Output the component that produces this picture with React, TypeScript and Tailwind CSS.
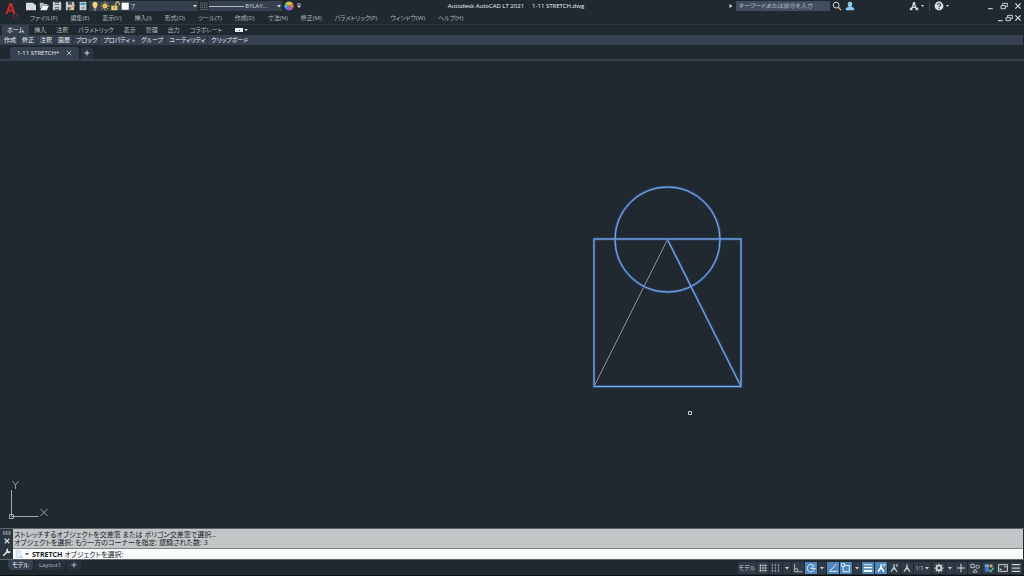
import React from 'react';

const MENUS = [
  'ファイル(F)',
  '編集(E)',
  '表示(V)',
  '挿入(I)',
  '形式(O)',
  'ツール(T)',
  '作成(D)',
  '寸法(N)',
  '修正(M)',
  'パラメトリック(P)',
  'ウィンドウ(W)',
  'ヘルプ(H)',
];

const RIBBON_TABS = ['ホーム', '挿入', '注釈', 'パラメトリック', '表示', '管理', '出力', 'コラボレート'];

const PANELS = ['作成', '修正', '注釈', '画層', 'ブロック', 'プロパティ', 'グループ', 'ユーティリティ', 'クリップボード'];

interface IconProps {
  children: React.ReactNode;
  className?: string;
}

// every icon is drawn on a 12 unit grid
const Icon: React.FC<IconProps> = ({ children, className = 'size-3' }) => (
  <svg viewBox="0 0 12 12" className={`shrink-0 ${className}`} fill="none" stroke="currentColor" strokeWidth="1" aria-hidden="true">
    {children}
  </svg>
);

const Caret = () => (
  <Icon className="size-1.5">
    <path d="M2 4h8L6 9z" fill="currentColor" stroke="none" />
  </Icon>
);

const QUICK_ACCESS = [
  {
    name: '新規作成',
    icon: <path d="M0 2h8l4 3v6H0z" fill="#d9dcdd" stroke="none" />,
  },
  {
    name: '開く',
    icon: (
      <>
        <path d="M1 2h4l1 1.500h4V5H4L1 10z" fill="#b9bec1" stroke="none" />
        <path d="M4 5.500H12L9.500 11H1.500z" fill="#f0f1f1" stroke="none" />
      </>
    ),
  },
  {
    name: '上書き保存',
    icon: (
      <>
        <path d="M1 1h10v10H1z" fill="#c9cdcf" stroke="none" />
        <path d="M3.500 1h5v3.500h-5zM3.500 7.500h5V11h-5z" fill="#4c565e" stroke="none" />
        <path d="M4 9h4M4 3h4" stroke="#dfe2e3" />
      </>
    ),
  },
  {
    name: '名前を付けて保存',
    icon: (
      <>
        <path d="M1 1h10v10H1z" fill="#c9cdcf" stroke="none" />
        <path d="M3.500 1h5v3.500h-5zM3 7.500h4V11H3z" fill="#4c565e" stroke="none" />
        <path d="M5.500 10.500L11.500 5" stroke="#e2a24e" strokeWidth="1.800" />
      </>
    ),
  },
  {
    name: '印刷',
    icon: (
      <>
        <path d="M2 1h8v10H2z" fill="#d6dadd" stroke="none" />
        <path d="M3 2h6v3H3z" fill="#4b94c8" stroke="none" />
        <path d="M4 7.500h4M4 9.500h4" stroke="#6f7a82" />
      </>
    ),
  },
];

const TitleBar = () => (
  <header className="flex h-3 items-center">
    <div className="flex min-w-0 flex-1 items-center">
      <div className="flex w-[25px] shrink-0" />
      <div className="flex gap-px">
        {QUICK_ACCESS.map((q) => (
          <button key={q.name} aria-label={q.name} className="flex size-3 items-center justify-center">
            <Icon className="size-2.5">{q.icon}</Icon>
          </button>
        ))}
      </div>
      <div className="flex h-2.5 w-[109px] shrink-0 items-center bg-[#35414f] pl-px">
        <Icon className="size-2.5">
          <path d="M6 1a3.300 3.300 0 0 0-1.800 6v1.500h3.600V7A3.300 3.300 0 0 0 6 1z" fill="#f4d474" stroke="none" />
          <path d="M4.500 9.500h3M5 11h2" stroke="#c9cdcf" />
        </Icon>
        <Icon className="size-2.5">
          <circle cx="6" cy="6" r="2.800" fill="#f6cf68" stroke="none" />
          <path d="M6 .5v11M.5 6h11M2 2l8 8M10 2l-8 8" stroke="#e9b94e" />
        </Icon>
        <Icon className="size-2.5">
          <path d="M1.500 5.500H9V11H1.500z" fill="#edca70" stroke="none" />
          <path d="M7 5.500V3a2 2 0 0 1 4 0v2" stroke="#edca70" strokeWidth="1.300" />
          <path d="M5.200 7v2" stroke="#6b5a2c" />
        </Icon>
        <Icon className="size-2.5">
          <path d="M2 2h8.500v8.500H2z" fill="#fff" stroke="none" />
        </Icon>
        <select aria-label="画層" className="ml-px min-w-0 flex-1 appearance-none bg-transparent text-[7px] leading-none">
          <option>7</option>
        </select>
        <Caret />
      </div>
      <button aria-label="線種" className="flex w-[11px] shrink-0 items-center justify-center text-[#8e979d]">
        <Icon className="size-2.5">
          <path d="M1 2.500h10M1 5h10M1 7.500h10M1 10h10" strokeDasharray="1.500 .8" />
        </Icon>
      </button>
      <div className="flex h-2.5 w-[73px] shrink-0 items-center bg-[#35414f]">
        <div className="h-px w-[35px] bg-[#b5babe]" />
        <select aria-label="線の太さ" className="min-w-0 flex-1 appearance-none bg-transparent pl-px text-[6px] leading-none">
          <option>BYLAY...</option>
        </select>
        <Caret />
      </div>
      <button aria-label="色" className="ml-0.5 flex shrink-0">
        <Icon className="size-2.5">
          <path d="M6 6V.5A5.500 5.500 0 0 1 10.800 3.300z" fill="#f2b33c" stroke="none" />
          <path d="M6 6l4.800-2.700a5.500 5.500 0 0 1 0 5.400z" fill="#ef7b45" stroke="none" />
          <path d="M6 6l4.800 2.700A5.500 5.500 0 0 1 6 11.500z" fill="#d0519d" stroke="none" />
          <path d="M6 6v5.500a5.500 5.500 0 0 1-4.800-2.800z" fill="#5a6fe0" stroke="none" />
          <path d="M6 6L1.200 8.700a5.500 5.500 0 0 1 0-5.400z" fill="#47b7dc" stroke="none" />
          <path d="M6 6L1.200 3.300A5.500 5.500 0 0 1 6 .5z" fill="#a8cf4e" stroke="none" />
        </Icon>
      </button>
      <button aria-label="クイック アクセスのカスタマイズ" className="ml-0.5 flex shrink-0">
        <Icon className="size-1.5">
          <path d="M2 2h8" strokeWidth="1.500" />
          <path d="M2 5h8l-4 5z" fill="currentColor" stroke="none" />
        </Icon>
      </button>
    </div>

    <h1 className="flex shrink-0 gap-2 pl-2 text-[6px] leading-none text-[#f1f3f4]">
      <span>Autodesk AutoCAD LT 2021</span>
      <span>1-11 STRETCH.dwg</span>
    </h1>

    <div className="flex min-w-0 flex-1 items-center justify-end">
      <button aria-label="検索を縮小" className="mr-0.5 flex">
        <Icon className="size-1.5">
          <path d="M3 2l6 4-6 4z" fill="currentColor" stroke="none" />
        </Icon>
      </button>
      <input
        type="search"
        aria-label="検索"
        placeholder="キーワードまたは語句を入力"
        className="h-2.5 w-[94px] bg-[#404c60] px-0.5 text-[6px] italic leading-none placeholder:text-[#b9c0c8]"
      />
      <button aria-label="検索を実行" className="ml-0.5 flex">
        <Icon className="size-2.5">
          <circle cx="5" cy="5" r="3.500" strokeWidth="1.200" />
          <path d="M7.500 7.500l3.500 3.500" stroke="#cdb47d" strokeWidth="1.600" />
        </Icon>
      </button>
      <button aria-label="サインイン" className="ml-[3px] flex text-[#8bc9f2]">
        <Icon className="size-2.5">
          <path d="M6 1a2.700 2.700 0 0 1 2.700 3c0 1.300-.5 2.200-1.200 2.800L11 8.500V11H1V8.500l3.500-1.700C3.800 6.200 3.300 5.300 3.300 4A2.700 2.700 0 0 1 6 1z" fill="currentColor" stroke="none" />
        </Icon>
      </button>
      <button aria-label="アプリ ストア" className="ml-[54px] flex items-center">
        <Icon className="size-2.5">
          <path d="M6 2.500L3 9.500M6 2.500l3 7M4 7.500h4" strokeWidth="1.500" />
          <path d="M4.500 1.500h3v3h-3zM1 8h3v3H1zM8 8h3v3H8z" fill="currentColor" stroke="none" />
        </Icon>
        <Icon className="size-1.5">
          <path d="M4 4h6L7 8z" fill="currentColor" stroke="none" />
        </Icon>
      </button>
      <div className="mx-1 h-2.5 w-px bg-[#3b4650]" />
      <button aria-label="ヘルプ" className="flex items-center">
        <Icon className="size-2.5">
          <circle cx="6" cy="6" r="5.300" fill="#dde0e2" stroke="none" />
          <path d="M4.300 4.700c0-2.300 3.600-2.100 3.600 0C7.900 6 6 6 6 7.500M6 8.500V10" stroke="#35414f" strokeWidth="1.300" />
        </Icon>
        <Icon className="size-1.5">
          <path d="M4 4h6L7 8z" fill="currentColor" stroke="none" />
        </Icon>
      </button>
      <WindowButtons gap="ml-9 gap-1.5" />
    </div>
  </header>
);

const WindowButtons: React.FC<{ gap: string }> = ({ gap }) => (
  <div className={`flex items-center pr-0.5 ${gap}`}>
    <button aria-label="最小化" className="flex">
      <Icon className="size-2">
        <path d="M3 10h7" strokeWidth="1.600" />
      </Icon>
    </button>
    <button aria-label="元に戻す" className="flex">
      <Icon className="size-2">
        <path d="M1.500 5.500h6.500v4.500H1.500zM4 5V2h7v5H8.500" strokeWidth="1.400" />
      </Icon>
    </button>
    <button aria-label="閉じる" className="flex">
      <Icon className="size-2">
        <path d="M2 2l8 8M10 2l-8 8" strokeWidth="1.800" />
      </Icon>
    </button>
  </div>
);

const Ribbon = () => (
  <>
    <nav className="flex h-[13px] items-center justify-between border-b border-[#2c3843] pl-[30px]">
      <div className="flex gap-[13px]">
        {MENUS.map((m) => (
          <button key={m} className="whitespace-nowrap text-[#b3b9be]">
            {m}
          </button>
        ))}
      </div>
      <WindowButtons gap="gap-px" />
    </nav>

    <div className="flex h-2.5 items-stretch pl-0.5">
      {RIBBON_TABS.map((t, i) => (
        <button
          key={t}
          className={`whitespace-nowrap px-[5px] ${i === 0 ? 'bg-[#35414e] text-white' : 'text-[#b3b9be]'}`}
        >
          {t}
        </button>
      ))}
      <button aria-label="リボンを最小化" className="ml-2 flex items-center gap-px">
        <span className="flex h-1 w-2 items-center justify-center bg-[#eceeef]">
          <span className="size-px bg-[#35414e]" />
        </span>
        <Icon className="size-1">
          <path d="M1 3h10L6 10z" fill="currentColor" stroke="none" />
        </Icon>
      </button>
    </div>

    <div className="mr-px flex h-2.5 items-stretch bg-[#35414e] pl-px text-[#eceeef]">
      {PANELS.map((p) => (
        <button key={p} className="flex items-center gap-0.5 whitespace-nowrap border-r border-[#2a3540] pr-0.5 pl-[3px] last:border-r-0">
          {p}
          {p === 'プロパティ' && <span>»</span>}
        </button>
      ))}
    </div>
  </>
);

const FileTabs = () => (
  <div className="flex h-4 shrink-0 items-end border-b-2 border-[#35414e] pl-2.5">
    <div className="flex h-3 items-center gap-[7px] rounded-t bg-[#35414e] px-[7px]">
      <span className="whitespace-nowrap text-[#eceeef]">1-11 STRETCH*</span>
      <button aria-label="図面を閉じる" className="flex">
        <Icon className="size-1.5">
          <path d="M1.500 1.500l9 9M10.500 1.500l-9 9" strokeWidth="1.500" />
        </Icon>
      </button>
    </div>
    <button aria-label="新しい図面" className="ml-0.5 flex h-3 w-3 items-center justify-center rounded-t bg-[#2a3641]">
      <Icon className="size-1.5">
        <path d="M6 1v10M1 6h10" strokeWidth="2" />
      </Icon>
    </button>
  </div>
);

const Drawing = () => (
  <main className="relative min-h-0 flex-1 overflow-hidden">
    <svg viewBox="0 0 1024 467" className="absolute inset-0 size-full" fill="none" role="img" aria-label="図面">
      <path d="M667.500 178.500L594 325.500" stroke="#8f9595" />
      <g stroke="#35609f" strokeWidth="2.300">
        <path d="M594 178h147v147.500H594z" />
        <path d="M667.500 178.500L741 325.500" />
        <circle cx="667.500" cy="178.500" r="52.500" />
      </g>
      <g stroke="#82a8dc" strokeWidth="1">
        <path d="M594 178h147v147.500H594z" />
        <path d="M667.500 178.500L741 325.500" />
        <circle cx="667.500" cy="178.500" r="52.500" />
      </g>
      <path d="M688.500 350.500h3v3h-3z" stroke="#c9cccd" />
    </svg>
    <svg viewBox="0 0 56 56" className="absolute bottom-0 left-0 size-14" fill="none" stroke="#a3a9ac" aria-hidden="true">
      <path d="M11.500 18v26.500H38.500" />
      <path d="M9.500 42.500h4v4h-4z" />
      <path d="M12.500 9l3 4 3-4M15.500 13v4M40.500 37l7 7M47.500 37l-7 7" strokeWidth=".9" />
    </svg>
  </main>
);

const CommandLine = () => (
  <section aria-label="コマンド ライン" className="flex h-8 shrink-0 border-y border-[#5d666c] pr-px">
    <div className="flex w-[13px] shrink-0 flex-col items-center justify-between bg-[#2a3540] py-0.5 text-[#dfe2e4]">
      <Icon className="h-1 w-2.5">
        <path d="M-6 3h24M-6 9h24" strokeWidth="3" strokeDasharray="3 1.500" />
      </Icon>
      <button aria-label="閉じる" className="flex">
        <Icon className="size-1.5">
          <path d="M1.500 1.500l9 9M10.500 1.500l-9 9" strokeWidth="2.200" />
        </Icon>
      </button>
      <button aria-label="カスタマイズ" className="flex">
        <Icon className="size-2.5">
          <path d="M1.500 10.500L7 5" strokeWidth="2" />
          <path d="M7.500 1.500a3 3 0 1 0 3.300 3.600L8.500 5.500 7 4z" fill="currentColor" stroke="none" />
        </Icon>
      </button>
    </div>
    <div className="flex min-w-0 flex-1 flex-col text-[7px] text-[#161b1f]">
      <div className="flex-1 bg-[#c3c6c7] pt-0.5 pl-px leading-2">
        <p>ストレッチするオブジェクトを交差窓 または ポリゴン交差窓で選択...</p>
        <p>オブジェクトを選択: もう一方のコーナーを指定: 認識された数: 3</p>
      </div>
      <div className="flex h-[11px] items-center border-t border-[#7d8387] bg-[#fbfdfd] pl-0.5">
        <button aria-label="最近使用したコマンド" className="flex items-center gap-px text-[#4c565e]">
          <Icon className="size-2">
            <path d="M2 1h6l1.500 10H2z" fill="#e6eff4" stroke="#b7cad5" />
            <path d="M8 11h4" stroke="#7cc0a4" />
          </Icon>
          <Caret />
        </button>
        <label htmlFor="command" className="ml-0.5 whitespace-nowrap">
          <b>STRETCH</b> オブジェクトを選択:
        </label>
        <input id="command" className="h-2 min-w-0 flex-1 bg-transparent pl-1 outline-none" />
      </div>
    </div>
  </section>
);

interface ToolProps {
  name: string;
  on?: boolean;
  width?: string;
  children: React.ReactNode;
}

const Tool: React.FC<ToolProps> = ({ name, on, width = 'w-3', children }) => (
  <button
    aria-label={name}
    aria-pressed={on}
    className={`flex h-3 items-center justify-center ${width} ${on ? 'bg-[#4f86bd] text-white' : 'bg-[#303b47] text-[#ccd0d3]'}`}
  >
    {children}
  </button>
);

const PERSON = 'M6 1.500v3.500L2.500 10.500M6 5l3.500 5.500M4.500 7h3';

const StatusBar = () => (
  <footer className="flex h-4 shrink-0 justify-between border-b border-[#0d1114] pr-0.5 pl-2">
    <div className="flex h-2.5 items-stretch gap-0.5">
      <button className="rounded-b bg-[#35414e] px-1 text-white">モデル</button>
      <button className="rounded-b bg-[#27323c] px-1 text-[#b3b9be]">Layout1</button>
      <button aria-label="新しいレイアウト" className="flex w-3.5 items-center justify-center rounded-b bg-[#27323c]">
        <Icon className="size-1.5">
          <path d="M6 1v10M1 6h10" strokeWidth="1.600" />
        </Icon>
      </button>
    </div>
    <div className="flex items-center gap-px">
      <Tool name="モデル空間" width="w-[18px]">
        モデル
      </Tool>
      <Tool name="グリッド">
        <Icon className="size-2.5">
          <path d="M3 1v10M6 1v10M9 1v10M1 3h10M1 6h10M1 9h10" strokeWidth=".7" />
        </Icon>
      </Tool>
      <Tool name="スナップ">
        <Icon className="size-2.5">
          <path d="M1 2.500h10M1 6h10M1 9.500h10" strokeWidth="1.400" strokeDasharray="1.400 2.200" />
        </Icon>
      </Tool>
      <Tool name="スナップ設定" width="w-2">
        <Caret />
      </Tool>
      <Tool name="直交モード">
        <Icon className="size-2.5">
          <path d="M2 1v9.500h9M2 7h3.500v3.500" />
        </Icon>
      </Tool>
      <Tool name="極トラッキング" on>
        <Icon className="size-2.5">
          <path d="M9 3A4.500 4.500 0 1 0 10.300 7M6 6.500h5.500M6 6.500l4.500-4.500" />
        </Icon>
      </Tool>
      <Tool name="極トラッキング設定" width="w-2">
        <Caret />
      </Tool>
      <Tool name="オブジェクト スナップ トラッキング" on>
        <Icon className="size-2.5">
          <path d="M10 1.500L2 10h9.500" />
        </Icon>
      </Tool>
      <Tool name="オブジェクト スナップ" on>
        <Icon className="size-2.5">
          <path d="M2.500 3h7.500v7.500H2.500z" />
          <path d="M.7.700h3.500v3.500H.7z" fill="#4f86bd" strokeWidth=".9" />
        </Icon>
      </Tool>
      <Tool name="オブジェクト スナップ設定" width="w-2">
        <Caret />
      </Tool>
      <Tool name="線の太さ" on>
        <Icon className="size-2.5">
          <path d="M1 2h10" />
          <path d="M1 5.500h10" strokeWidth="1.700" />
          <path d="M1 9.500h10" strokeWidth="2.400" />
        </Icon>
      </Tool>
      <Tool name="注釈オブジェクトを表示" on>
        <Icon className="size-2.5">
          <path d={PERSON} strokeWidth="1.800" />
          <circle cx="9.500" cy="2.500" r="1.300" strokeWidth=".8" />
        </Icon>
      </Tool>
      <Tool name="尺度を自動追加">
        <Icon className="size-2.5">
          <path d={PERSON} strokeWidth="1.500" />
          <path d="M9.500 1v3.500M8 2.700h3" strokeWidth=".9" />
        </Icon>
      </Tool>
      <Tool name="注釈尺度">
        <Icon className="size-2.5">
          <path d={PERSON} strokeWidth="1.500" />
        </Icon>
      </Tool>
      <Tool name="尺度 1:1" width="w-[17px]">
        <span>1:1</span>
        <Caret />
      </Tool>
      <Tool name="ワークスペースの切り替え" width="w-[13px]">
        <Icon className="size-2.5">
          <circle cx="6" cy="6" r="2.800" strokeWidth="2.200" />
          <path d="M6 .5v2M6 9.500v2M.5 6h2M9.500 6h2M2.100 2.100l1.400 1.400M8.500 8.500l1.400 1.400M9.900 2.100L8.500 3.500M3.500 8.500L2.100 9.900" strokeWidth="1.500" />
        </Icon>
      </Tool>
      <Tool name="ワークスペース設定" width="w-2">
        <Caret />
      </Tool>
      <Tool name="注釈モニター">
        <Icon className="size-2.5">
          <path d="M6 1v10M1 6h10" strokeWidth="1.300" />
        </Icon>
      </Tool>
      <Tool name="オブジェクトを選択表示" width="w-[13px]">
        <Icon className="size-2.5">
          <path d="M1 1.500h4v4H1zM6 7.500l2.500 3.500h-5z" />
          <circle cx="9" cy="4.500" r="2" />
        </Icon>
      </Tool>
      <Tool name="ハードウェア アクセラレーション" width="w-[13px]">
        <Icon className="size-2.5">
          <path d="M1 1.500h5v4H1z" fill="#6aa7e6" stroke="none" />
          <path d="M1 6h5v4.500H1z" fill="#3f74c0" stroke="none" />
          <circle cx="8.500" cy="3.500" r="2" fill="#dba74f" stroke="none" />
          <path d="M6 8.500l2 2 3.500-5" stroke="#5cc26a" strokeWidth="1.600" />
        </Icon>
      </Tool>
      <Tool name="フルスクリーン表示" width="w-[13px]">
        <Icon className="size-2.5">
          <path d="M.7 2h10.600v8H.7z" strokeWidth="1.200" />
          <path d="M7 4h2.500v2M2.500 6v2H5" />
        </Icon>
      </Tool>
      <Tool name="カスタマイズ">
        <Icon className="size-2.5">
          <path d="M1 2h10M1 6h10M1 10h10" strokeWidth="1.500" />
        </Icon>
      </Tool>
    </div>
  </footer>
);

export default function App() {
  return (
    <div className="flex h-screen flex-col overflow-hidden bg-[#1f292f] font-['Open_Sans','Noto_Sans_CJK_JP',sans-serif] text-[6px] leading-none text-[#d5d9dc] [font-feature-settings:'palt']">
      <div className="relative shrink-0">
        <TitleBar />
        <Ribbon />
        <button aria-label="アプリケーション メニュー" className="absolute top-0.5 left-1 flex">
          <svg viewBox="0 0 16 18" className="h-[18px] w-4" fill="none" aria-hidden="true">
            <path d="M1.500 12L5.500 1h2.500l3.500 10.500-2.200.5-.8-2.500H4.500L3.700 12z" fill="#c8282f" />
            <path d="M6.700 3.800L5.200 7.800h2.700z" fill="#1f292f" />
            <path d="M9.500 12.500v3h1.500M11.500 13h2.500M12.700 13v2.500" stroke="#8f262c" strokeWidth=".9" />
          </svg>
        </button>
      </div>
      <FileTabs />
      <Drawing />
      <CommandLine />
      <StatusBar />
    </div>
  );
}
